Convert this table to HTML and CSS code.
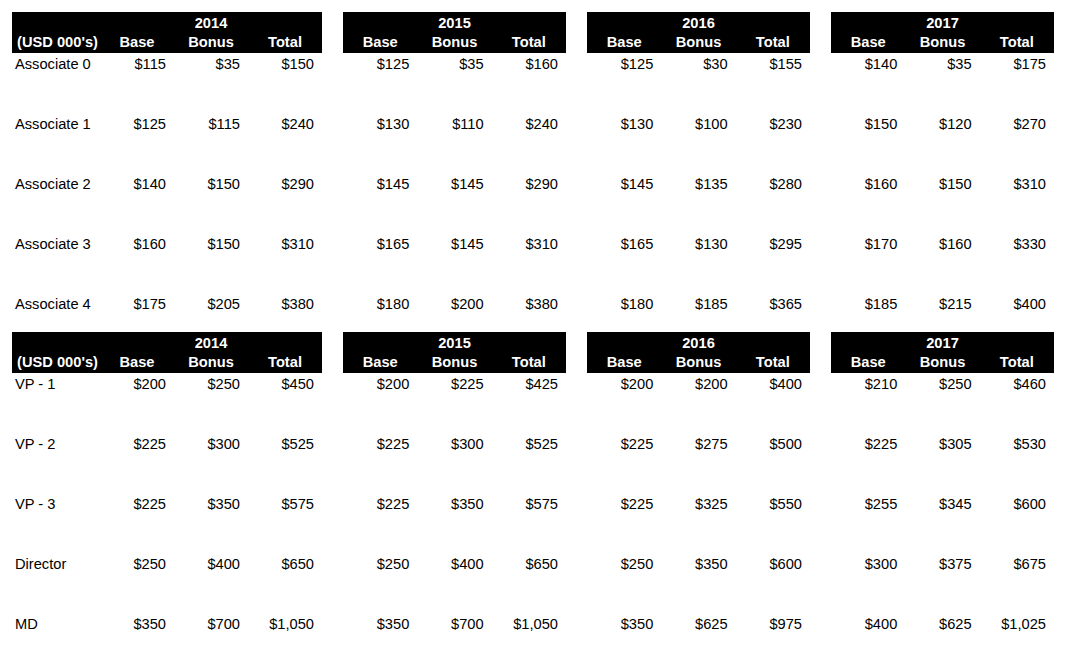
FILE: index.html
```html
<!DOCTYPE html>
<html>
<head>
<meta charset="utf-8">
<link rel="stylesheet" href="styles.css">
</head>
<body>
<div class="sheet">
  <section class="sec">
    <div class="block first">
      <div class="head">
        <div class="g"><span></span><span class="yr">2014</span></div>
        <div class="g cols"><span class="lbl">(USD 000's)</span><span>Base</span><span>Bonus</span><span>Total</span></div>
      </div>
      <div class="g row"><span class="lbl">Associate 0</span><span>$115</span><span>$35</span><span>$150</span></div>
      <div class="g row"><span class="lbl">Associate 1</span><span>$125</span><span>$115</span><span>$240</span></div>
      <div class="g row"><span class="lbl">Associate 2</span><span>$140</span><span>$150</span><span>$290</span></div>
      <div class="g row"><span class="lbl">Associate 3</span><span>$160</span><span>$150</span><span>$310</span></div>
      <div class="g row"><span class="lbl">Associate 4</span><span>$175</span><span>$205</span><span>$380</span></div>
    </div>
    <div class="block">
      <div class="head">
        <div class="g"><span class="yr">2015</span></div>
        <div class="g cols"><span>Base</span><span>Bonus</span><span>Total</span></div>
      </div>
      <div class="g row"><span>$125</span><span>$35</span><span>$160</span></div>
      <div class="g row"><span>$130</span><span>$110</span><span>$240</span></div>
      <div class="g row"><span>$145</span><span>$145</span><span>$290</span></div>
      <div class="g row"><span>$165</span><span>$145</span><span>$310</span></div>
      <div class="g row"><span>$180</span><span>$200</span><span>$380</span></div>
    </div>
    <div class="block">
      <div class="head">
        <div class="g"><span class="yr">2016</span></div>
        <div class="g cols"><span>Base</span><span>Bonus</span><span>Total</span></div>
      </div>
      <div class="g row"><span>$125</span><span>$30</span><span>$155</span></div>
      <div class="g row"><span>$130</span><span>$100</span><span>$230</span></div>
      <div class="g row"><span>$145</span><span>$135</span><span>$280</span></div>
      <div class="g row"><span>$165</span><span>$130</span><span>$295</span></div>
      <div class="g row"><span>$180</span><span>$185</span><span>$365</span></div>
    </div>
    <div class="block">
      <div class="head">
        <div class="g"><span class="yr">2017</span></div>
        <div class="g cols"><span>Base</span><span>Bonus</span><span>Total</span></div>
      </div>
      <div class="g row"><span>$140</span><span>$35</span><span>$175</span></div>
      <div class="g row"><span>$150</span><span>$120</span><span>$270</span></div>
      <div class="g row"><span>$160</span><span>$150</span><span>$310</span></div>
      <div class="g row"><span>$170</span><span>$160</span><span>$330</span></div>
      <div class="g row"><span>$185</span><span>$215</span><span>$400</span></div>
    </div>
  </section>

  <section class="sec">
    <div class="block first">
      <div class="head">
        <div class="g"><span></span><span class="yr">2014</span></div>
        <div class="g cols"><span class="lbl">(USD 000's)</span><span>Base</span><span>Bonus</span><span>Total</span></div>
      </div>
      <div class="g row"><span class="lbl">VP - 1</span><span>$200</span><span>$250</span><span>$450</span></div>
      <div class="g row"><span class="lbl">VP - 2</span><span>$225</span><span>$300</span><span>$525</span></div>
      <div class="g row"><span class="lbl">VP - 3</span><span>$225</span><span>$350</span><span>$575</span></div>
      <div class="g row"><span class="lbl">Director</span><span>$250</span><span>$400</span><span>$650</span></div>
      <div class="g row"><span class="lbl">MD</span><span>$350</span><span>$700</span><span>$1,050</span></div>
    </div>
    <div class="block">
      <div class="head">
        <div class="g"><span class="yr">2015</span></div>
        <div class="g cols"><span>Base</span><span>Bonus</span><span>Total</span></div>
      </div>
      <div class="g row"><span>$200</span><span>$225</span><span>$425</span></div>
      <div class="g row"><span>$225</span><span>$300</span><span>$525</span></div>
      <div class="g row"><span>$225</span><span>$350</span><span>$575</span></div>
      <div class="g row"><span>$250</span><span>$400</span><span>$650</span></div>
      <div class="g row"><span>$350</span><span>$700</span><span>$1,050</span></div>
    </div>
    <div class="block">
      <div class="head">
        <div class="g"><span class="yr">2016</span></div>
        <div class="g cols"><span>Base</span><span>Bonus</span><span>Total</span></div>
      </div>
      <div class="g row"><span>$200</span><span>$200</span><span>$400</span></div>
      <div class="g row"><span>$225</span><span>$275</span><span>$500</span></div>
      <div class="g row"><span>$225</span><span>$325</span><span>$550</span></div>
      <div class="g row"><span>$250</span><span>$350</span><span>$600</span></div>
      <div class="g row"><span>$350</span><span>$625</span><span>$975</span></div>
    </div>
    <div class="block">
      <div class="head">
        <div class="g"><span class="yr">2017</span></div>
        <div class="g cols"><span>Base</span><span>Bonus</span><span>Total</span></div>
      </div>
      <div class="g row"><span>$210</span><span>$250</span><span>$460</span></div>
      <div class="g row"><span>$225</span><span>$305</span><span>$530</span></div>
      <div class="g row"><span>$255</span><span>$345</span><span>$600</span></div>
      <div class="g row"><span>$300</span><span>$375</span><span>$675</span></div>
      <div class="g row"><span>$400</span><span>$625</span><span>$1,025</span></div>
    </div>
  </section>
</div>
</body>
</html>
```

FILE: styles.css
```css
* { box-sizing: border-box; }
html, body { margin: 0; padding: 0; background: #fff; }
body {
  font-family: "Liberation Sans", Arial, sans-serif;
  font-size: 14.67px;
  color: #000;
}
.sheet {
  padding: 12px 0 0 12px;
  display: flex;
  flex-direction: column;
  gap: 19px;
}
.sec {
  display: flex;
  gap: 21px;
  align-items: flex-start;
}
.block {
  width: 223px;
  display: flex;
  flex-direction: column;
  --cols: repeat(3, 1fr);
}
.block.first {
  width: 310px;
  --cols: 88px 74px 74px 74px;
}
.g {
  display: grid;
  grid-template-columns: var(--cols);
  height: 20px;
  line-height: 22px;
  white-space: nowrap;
}
.head {
  background: #000;
  color: #fff;
  font-weight: bold;
}
.head .g > span { text-align: center; }
.head .cols { height: 21px; line-height: 21px; }
.head .yr { grid-column: span 3; }
.head .lbl, .row .lbl { text-align: left; padding-left: 3px; }
.row { margin-bottom: 40px; }
.row:last-child { margin-bottom: 0; }
.row > span { text-align: right; padding-right: 8px; }
```
